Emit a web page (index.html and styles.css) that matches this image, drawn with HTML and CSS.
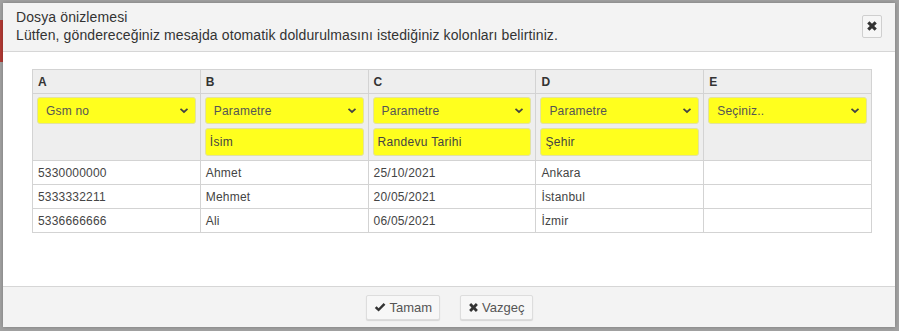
FILE: index.html
```html
<!DOCTYPE html>
<html lang="tr">
<head>
    <meta charset="UTF-8">
    <meta name="viewport" content="width=device-width, initial-scale=1.0">
    <title>Dosya önizlemesi</title>
    <link rel="stylesheet" href="styles.css">
</head>
<body>
    <div class="backdrop-mark"></div>

    <div class="modal">
        <div class="modal-header">
            <div class="modal-title">
                <div>Dosya önizlemesi</div>
                <div>Lütfen, göndereceğiniz mesajda otomatik doldurulmasını istediğiniz kolonları belirtiniz.</div>
            </div>
            <button type="button" class="close-btn" title="Kapat">
                <svg width="12" height="12" viewBox="0 0 12 12"><path d="M1.2 3.4 L3.4 1.2 L6 3.8 L8.6 1.2 L10.8 3.4 L8.2 6 L10.8 8.6 L8.6 10.8 L6 8.2 L3.4 10.8 L1.2 8.6 L3.8 6 Z" fill="#333"/></svg>
            </button>
        </div>

        <div class="modal-body">
            <table class="preview">
                <tr class="col-names">
                    <th>A</th>
                    <th>B</th>
                    <th>C</th>
                    <th>D</th>
                    <th>E</th>
                </tr>
                <tr class="col-map">
                    <td>
                        <div class="pick"><span>Gsm no</span><svg width="10" height="7" viewBox="0 0 10 7"><path d="M1.5 1.8 L5 5 L8.5 1.8" fill="none" stroke="#444" stroke-width="1.7"/></svg></div>
                    </td>
                    <td>
                        <div class="pick"><span>Parametre</span><svg width="10" height="7" viewBox="0 0 10 7"><path d="M1.5 1.8 L5 5 L8.5 1.8" fill="none" stroke="#444" stroke-width="1.7"/></svg></div>
                        <div class="param">İsim</div>
                    </td>
                    <td>
                        <div class="pick"><span>Parametre</span><svg width="10" height="7" viewBox="0 0 10 7"><path d="M1.5 1.8 L5 5 L8.5 1.8" fill="none" stroke="#444" stroke-width="1.7"/></svg></div>
                        <div class="param">Randevu Tarihi</div>
                    </td>
                    <td>
                        <div class="pick"><span>Parametre</span><svg width="10" height="7" viewBox="0 0 10 7"><path d="M1.5 1.8 L5 5 L8.5 1.8" fill="none" stroke="#444" stroke-width="1.7"/></svg></div>
                        <div class="param">Şehir</div>
                    </td>
                    <td>
                        <div class="pick"><span>Seçiniz..</span><svg width="10" height="7" viewBox="0 0 10 7"><path d="M1.5 1.8 L5 5 L8.5 1.8" fill="none" stroke="#444" stroke-width="1.7"/></svg></div>
                    </td>
                </tr>
                <tr>
                    <td>5330000000</td>
                    <td>Ahmet</td>
                    <td>25/10/2021</td>
                    <td>Ankara</td>
                    <td></td>
                </tr>
                <tr>
                    <td>5333332211</td>
                    <td>Mehmet</td>
                    <td>20/05/2021</td>
                    <td>İstanbul</td>
                    <td></td>
                </tr>
                <tr>
                    <td>5336666666</td>
                    <td>Ali</td>
                    <td>06/05/2021</td>
                    <td>İzmir</td>
                    <td></td>
                </tr>
            </table>
        </div>

        <div class="modal-footer">
            <button type="button" class="btn">
                <svg width="12" height="11" viewBox="0 0 12 11"><path d="M0.8 6 L2.6 4.2 L4.6 6.2 L9.6 1 L11.4 2.8 L4.6 9.6 Z" fill="#333"/></svg>
                Tamam
            </button>
            <button type="button" class="btn">
                <svg width="11" height="11" viewBox="0 0 12 12"><path d="M1.2 3.4 L3.4 1.2 L6 3.8 L8.6 1.2 L10.8 3.4 L8.2 6 L10.8 8.6 L8.6 10.8 L6 8.2 L3.4 10.8 L1.2 8.6 L3.8 6 Z" fill="#333"/></svg>
                Vazgeç
            </button>
        </div>
    </div>
</body>
</html>
```

FILE: styles.css
```css
body {
    margin: 0;
    padding: 3px 4px 4px 3px;
    background-color: #a2a2a2;
    font-family: 'Liberation Sans', Arial, sans-serif;
    color: #333;
}

/* sayfanin arkasinda kalan kirmizi etiket */
.backdrop-mark {
    position: absolute;
    left: 0;
    top: 20px;
    width: 3px;
    height: 42px;
    background-color: #b23a34;
}

.modal {
    position: relative;
    height: 324px;
    background-color: #fff;
    box-shadow: 0 0 4px rgba(0,0,0,0.25);
    display: flex;
    flex-direction: column;
}

.modal-header {
    height: 48px;
    background-color: #f3f3f3;
    border-bottom: 1px solid #d6d6d6;
    display: flex;
    justify-content: space-between;
    align-items: center;
    padding: 0 13px 0 13px;
}

.modal-title {
    font-size: 14px;
    line-height: 18px;
    letter-spacing: 0.11px;
    color: #333;
    margin-top: -2px;
}

.close-btn {
    width: 20px;
    height: 23px;
    padding: 0;
    border: 1px solid #cfcfcf;
    border-radius: 2px;
    background-color: #f6f6f6;
    display: flex;
    align-items: center;
    justify-content: center;
    margin-top: -2px;
}

.modal-body {
    flex: 1;
    padding: 17px 23px 0 29px;
}

.preview {
    width: 840px;
    border-collapse: collapse;
    table-layout: fixed;
    font-size: 12px;
}

.preview th, .preview td {
    border: 1px solid #d3d3d3;
    padding: 0 5px;
    text-align: left;
    vertical-align: middle;
}

.preview th {
    height: 23px;
    background-color: #eee;
    font-weight: bold;
    color: #333;
}

.preview td {
    height: 23px;
    color: #444;
    letter-spacing: 0.2px;
}

.col-map td {
    background-color: #eee;
    vertical-align: top;
    padding: 3px 4px 4px 4px;
    height: auto;
}

.pick, .param {
    background-color: #ffff1e;
    border: 1px solid #e2e2a0;
    border-radius: 3px;
    box-sizing: border-box;
    color: #555;
    font-size: 12px;
    display: flex;
    align-items: center;
}

.pick {
    height: 27px;
    padding: 0 6px 0 8px;
    justify-content: space-between;
}

.param {
    height: 28px;
    margin-top: 4px;
    padding: 0 4px;
    color: #444;
    letter-spacing: 0.3px;
}

.modal-footer {
    height: 40px;
    background-color: #f3f3f3;
    border-top: 1px solid #d6d6d6;
    display: flex;
    justify-content: center;
    align-items: center;
    gap: 20px;
    padding-left: 1px;
}

.btn {
    height: 25px;
    padding: 0 7px;
    border: 1px solid #ddd;
    border-radius: 2px;
    background-color: #f7f7f7;
    box-shadow: 0 1px 1px rgba(0,0,0,0.12);
    font-family: 'Liberation Sans', Arial, sans-serif;
    font-size: 13px;
    color: #555;
    display: flex;
    align-items: center;
    gap: 3px;
}
```
